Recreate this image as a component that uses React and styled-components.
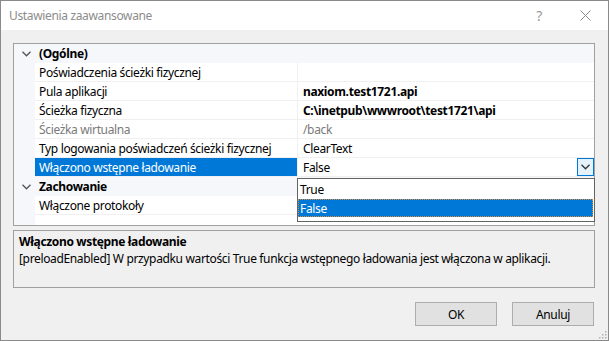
import React from 'react';
import styled, { createGlobalStyle } from 'styled-components';

const GlobalStyle = createGlobalStyle`
  body {
    margin: 0;
    background: #ffffff;
    font-family: "Noto Sans", "Open Sans", sans-serif;
    font-size: 12px;
    letter-spacing: -0.35px;
    color: #000000;
  }
`;

const Dialog = styled.div`
  width: 609px;
  height: 341px;
  box-sizing: border-box;
  border: 1px solid #8a8a8a;
  display: flex;
  flex-direction: column;
  background: #f0f0f0;
  position: relative;
`;

const TitleBar = styled.div`
  height: 29px;
  background: #ffffff;
  display: flex;
  align-items: center;
  padding-left: 8px;
  flex-shrink: 0;
`;

const TitleText = styled.div`
  flex: 1;
  color: #8c8c8c;
  font-size: 12px;
`;

const TitleButton = styled.div`
  width: 46px;
  height: 29px;
  display: flex;
  align-items: center;
  justify-content: center;
  color: #9a9a9a;
  font-size: 14px;
`;

const Body = styled.div`
  flex: 1;
  display: flex;
  flex-direction: column;
  padding: 13px 13px 0 12px;
`;

const Grid = styled.div`
  height: 183px;
  box-sizing: border-box;
  border: 1px solid #a0a0a0;
  background: #ffffff;
  position: relative;
  display: flex;
  flex-direction: column;
`;

const Row = styled.div`
  height: 19px;
  display: grid;
  grid-template-columns: 21px 262px 1fr;
  flex-shrink: 0;
`;

const CategoryRow = styled.div`
  height: 19px;
  display: flex;
  align-items: center;
  background: #f5f7fb;
  font-weight: bold;
  flex-shrink: 0;
`;

const CategoryName = styled.span`
  padding-left: 4px;
`;

const Margin = styled.div`
  background: #f5f7fb;
`;

const Chevron = styled.div`
  width: 21px;
  display: flex;
  align-items: center;
  justify-content: center;
  padding-left: 4px;
  box-sizing: border-box;
`;

const Cell = styled.div`
  box-sizing: border-box;
  border-bottom: 1px solid #f0f0f0;
  padding-left: ${(p) => (p.$value ? '5px' : '4px')};
  border-left: ${(p) => (p.$value ? '1px solid #f0f0f0' : 'none')};
  display: flex;
  align-items: center;
  white-space: nowrap;
  overflow: hidden;
  background: ${(p) => (p.$selected ? '#0078d7' : '#ffffff')};
  color: ${(p) => (p.$selected ? '#ffffff' : p.$disabled ? '#7a7a7a' : '#000000')};
  font-weight: ${(p) => (p.$bold ? 'bold' : 'normal')};
  position: relative;
`;

const Filler = styled.div`
  flex: 1;
  display: grid;
  grid-template-columns: 21px 1fr;
`;

const DropButton = styled.div`
  position: absolute;
  right: 0;
  top: 0;
  width: 17px;
  height: 18px;
  box-sizing: border-box;
  border: 1px solid #0078d7;
  background: #e5f1fb;
  display: flex;
  align-items: center;
  justify-content: center;
`;

const DropList = styled.div`
  position: absolute;
  left: 283px;
  top: 134px;
  width: 298px;
  height: 44px;
  box-sizing: border-box;
  border: 1px solid #646464;
  background: #ffffff;
  display: flex;
  flex-direction: column;
  z-index: 2;
`;

const ListItem = styled.div`
  height: ${(p) => (p.$selected ? '18px' : '20px')};
  box-sizing: border-box;
  display: flex;
  align-items: center;
  padding-left: 2px;
  margin-right: 1px;
  background: ${(p) => (p.$selected ? '#0078d7' : '#ffffff')};
  color: ${(p) => (p.$selected ? '#ffffff' : '#000000')};
  outline: ${(p) => (p.$selected ? '1px dotted #e08a3a' : 'none')};
  outline-offset: -1px;
`;

const Description = styled.div`
  margin-top: 4px;
  height: 58px;
  box-sizing: border-box;
  border: 1px solid #a0a0a0;
  padding: 2px 5px;
  display: flex;
  flex-direction: column;
`;

const DescTitle = styled.div`
  font-weight: bold;
  line-height: 17px;
`;

const DescText = styled.div`
  line-height: 17px;
`;

const Buttons = styled.div`
  display: flex;
  justify-content: flex-end;
  gap: 15px;
  margin-top: 14px;
  padding-right: 1px;
`;

const Button = styled.div`
  width: 82px;
  height: 24px;
  box-sizing: border-box;
  border: 1px solid #adadad;
  background: #e1e1e1;
  display: flex;
  align-items: center;
  justify-content: center;
`;

const Grip = styled.svg`
  position: absolute;
  right: 1px;
  bottom: 1px;
`;

const ChevronIcon = ({ color = '#555555' }) => (
  <svg width="9" height="6" viewBox="0 0 9 6">
    <path d="M0.5 0.8 L4.5 4.8 L8.5 0.8" fill="none" stroke={color} strokeWidth="1.3" />
  </svg>
);

const props = [
  { label: 'Poświadczenia ścieżki fizycznej', value: '' },
  { label: 'Pula aplikacji', value: 'naxiom.test1721.api', bold: true },
  { label: 'Ścieżka fizyczna', value: 'C:\\inetpub\\wwwroot\\test1721\\api', bold: true },
  { label: 'Ścieżka wirtualna', value: '/back', disabled: true },
  { label: 'Typ logowania poświadczeń ścieżki fizycznej', value: 'ClearText' },
  { label: 'Włączono wstępne ładowanie', value: 'False', selected: true },
];

export default function App() {
  return (
    <>
      <GlobalStyle />
      <Dialog>
        <TitleBar>
          <TitleText>Ustawienia zaawansowane</TitleText>
          <TitleButton>?</TitleButton>
          <TitleButton>
            <svg width="11" height="11" viewBox="0 0 11 11">
              <path d="M0.5 0.5 L10.5 10.5 M10.5 0.5 L0.5 10.5" stroke="#8a8a8a" strokeWidth="1" />
            </svg>
          </TitleButton>
        </TitleBar>
        <Body>
          <Grid>
            <CategoryRow>
              <Chevron><ChevronIcon /></Chevron>
              <CategoryName>(Ogólne)</CategoryName>
            </CategoryRow>
            {props.map((p) => (
              <Row key={p.label}>
                <Margin />
                <Cell $selected={p.selected} $disabled={p.disabled}>{p.label}</Cell>
                <Cell $value $bold={p.bold} $disabled={p.disabled}>
                  {p.value}
                  {p.selected && (
                    <DropButton>
                      <ChevronIcon color="#333333" />
                    </DropButton>
                  )}
                </Cell>
              </Row>
            ))}
            <CategoryRow>
              <Chevron><ChevronIcon /></Chevron>
              <CategoryName>Zachowanie</CategoryName>
            </CategoryRow>
            <Row>
              <Margin />
              <Cell>Włączone protokoły</Cell>
              <Cell $value />
            </Row>
            <Filler>
              <Margin />
              <div />
            </Filler>
            <DropList>
              <ListItem>True</ListItem>
              <ListItem $selected>False</ListItem>
            </DropList>
          </Grid>
          <Description>
            <DescTitle>Włączono wstępne ładowanie</DescTitle>
            <DescText>
              [preloadEnabled] W przypadku wartości True funkcja wstępnego ładowania jest włączona w aplikacji.
            </DescText>
          </Description>
          <Buttons>
            <Button>OK</Button>
            <Button>Anuluj</Button>
          </Buttons>
        </Body>
        <Grip width="10" height="10" viewBox="0 0 10 10">
          {[[8, 2], [8, 5], [8, 8], [5, 5], [5, 8], [2, 8]].map(([x, y]) => (
            <rect key={`${x}-${y}`} x={x} y={y} width="1.5" height="1.5" fill="#b0b0b0" />
          ))}
        </Grip>
      </Dialog>
    </>
  );
}
